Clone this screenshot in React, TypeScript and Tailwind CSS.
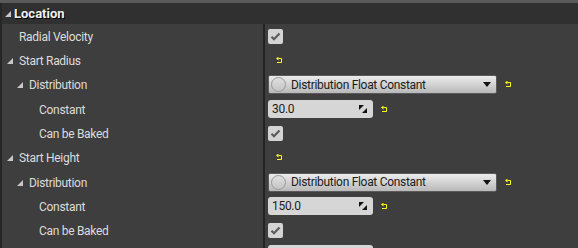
import React from "react";

const font = { fontFamily: "Roboto, 'Noto Sans', sans-serif" };

function Tri() {
  return (
    <svg width="6" height="6" viewBox="0 0 6 6" className="shrink-0">
      <polygon points="6,0 6,6 0,6" fill="#c8c8c8" />
    </svg>
  );
}

function Reset() {
  return (
    <svg width="7" height="7" viewBox="0 0 7 7" className="shrink-0">
      <path d="M2.5 1.5 H5.5 V5.5 H1" stroke="#ffff1a" strokeWidth="1" fill="none" />
      <polygon points="0,1.5 2.5,-0.5 2.5,3.5" fill="#ffff1a" />
    </svg>
  );
}

function Check() {
  return (
    <div className="w-[15px] h-[15px] rounded-[2px] bg-[#d4d4d4] flex items-center justify-center">
      <svg width="11" height="9" viewBox="0 0 11 9">
        <path d="M1.5 4.8 L4 7.2 L9.5 1.6" stroke="#5c5c5c" strokeWidth="2.2" fill="none" />
      </svg>
    </div>
  );
}

function Dropdown() {
  return (
    <div className="flex items-center gap-[8px]">
      <div className="w-[229px] h-[19px] rounded-[2px] border border-[#5a5a5a] bg-gradient-to-b from-[#ececec] to-[#b9b9b9] flex items-center pl-[2px] pr-[4px]">
        <div className="w-[15px] h-[15px] rounded-full border border-[#9a9a9a] bg-gradient-to-b from-[#e0e0e0] to-[#c4c4c4] shrink-0" />
        <span className="ml-[5px] text-[12px] tracking-[-0.3px] text-[#1c1c1c] flex-1 leading-none">Distribution Float Constant</span>
        <svg width="8" height="5" viewBox="0 0 8 5" className="mr-[1px]">
          <polygon points="0,0 8,0 4,5" fill="#111" />
        </svg>
      </div>
      <Reset />
    </div>
  );
}

function NumBox({ v }: { v: string }) {
  return (
    <div className="flex items-center gap-[8px]">
      <div className="w-[105px] h-[18px] rounded-[3px] bg-[#d6d6d6] flex items-center pl-[4px] pr-[6px]">
        <span className="text-[12px] tracking-[-0.3px] text-[#1c1c1c] flex-1 leading-none">{v}</span>
        <svg width="8" height="8" viewBox="0 0 8 8">
          <polygon points="0,0 5,0 0,5" fill="#111" />
          <polygon points="8,3 8,8 3,8" fill="#111" />
        </svg>
      </div>
      <Reset />
    </div>
  );
}

type Row = { label: string; level: number; tri?: boolean; value: React.ReactNode; h: string };

export default function App() {
  const rows: Row[] = [
    { label: "Radial Velocity", level: 0, value: <Check />, h: "h-[24px]" },
    { label: "Start Radius", level: 0, tri: true, value: <div className="pl-[8px]"><Reset /></div>, h: "h-[24px]" },
    { label: "Distribution", level: 1, tri: true, value: <Dropdown />, h: "h-[25px]" },
    { label: "Constant", level: 2, value: <NumBox v="30.0" />, h: "h-[24px]" },
    { label: "Can be Baked", level: 2, value: <Check />, h: "h-[24px]" },
    { label: "Start Height", level: 0, tri: true, value: <div className="pl-[8px]"><Reset /></div>, h: "h-[25px]" },
    { label: "Distribution", level: 1, tri: true, value: <Dropdown />, h: "h-[24px]" },
    { label: "Constant", level: 2, value: <NumBox v="150.0" />, h: "h-[24px]" },
    { label: "Can be Baked", level: 2, value: <Check />, h: "h-[25px]" },
  ];
  const pad = ["pl-[17px]", "pl-[27px]", "pl-[37px]"];
  const triPad = ["pl-[5px]", "pl-[15px]", "pl-[25px]"];
  return (
    <div className="w-[578px] h-[248px] overflow-hidden bg-[#3e3e3e] text-[#dcdcdc]" style={font}>
      <div className="h-[3px] bg-[#5a5a5a]" />
      <div className="flex border-l-2 border-[#262626]">
        <div className="flex-1">
          <div className="h-[21px] bg-[#303030] flex items-center pl-[3px] gap-[3px]">
            <Tri />
            <span className="text-[13px] font-bold text-[#f0f0f0] [text-shadow:1px_1px_0_#000]">Location</span>
          </div>
          <div className="flex">
            <div className="w-[263px] border-r-2 border-[#232323]">
              {rows.map((r, i) => (
                <div key={i} className={`${r.h} flex items-center pt-[1px] ${r.tri ? triPad[r.level] : pad[r.level]} gap-[6px]`}>
                  {r.tri && <Tri />}
                  <span className="text-[12px] tracking-[-0.3px] leading-none">{r.label}</span>
                </div>
              ))}
              <div className="h-[20px]" />
            </div>
            <div className="flex-1 pl-[3px]">
              {rows.map((r, i) => (
                <div key={i} className={`${r.h} flex items-center`}>
                  {r.value}
                </div>
              ))}
              <div className="h-[20px] pt-[2px]">
                <div className="w-[105px] h-[18px] rounded-[3px] bg-[#d6d6d6]" />
              </div>
            </div>
          </div>
        </div>
      </div>
    </div>
  );
}
